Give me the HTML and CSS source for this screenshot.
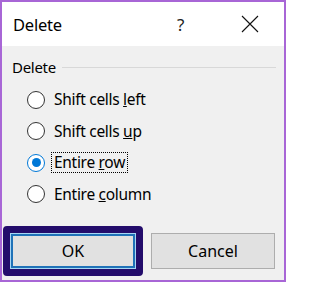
FILE: index.html
```html
<!DOCTYPE html>
<html>
<head>
<meta charset="utf-8">
<link rel="stylesheet" href="styles.css">
</head>
<body>
<div class="dialog">
  <div class="titlebar">
    <span class="title">Delete</span>
    <span class="help">?</span>
    <span class="close">
      <svg width="18" height="18" viewBox="0 0 18 18"><path d="M1 1 L17 17 M17 1 L1 17" stroke="#111" stroke-width="1.1" fill="none"/></svg>
    </span>
  </div>
  <div class="body">
    <div class="group-head"><span class="group-label">Delete</span><span class="group-line"></span></div>
    <div class="options">
      <div class="opt"><span class="radio"></span><span class="lbl">Shift cells <u>l</u>eft</span></div>
      <div class="opt"><span class="radio"></span><span class="lbl">Shift cells <u>u</u>p</span></div>
      <div class="opt"><span class="radio checked"></span><span class="lbl focus">Entire <u>r</u>ow</span></div>
      <div class="opt"><span class="radio"></span><span class="lbl">Entire <u>c</u>olumn</span></div>
    </div>
    <div class="buttons">
      <div class="ok-frame"><div class="btn ok">OK</div></div>
      <div class="btn cancel">Cancel</div>
    </div>
  </div>
</div>
</body>
</html>
```
FILE: styles.css
```css
html, body { margin: 0; padding: 0; }
body { font-family: "Noto Sans", "Open Sans", sans-serif; color: #000; }
.dialog {
  width: 286px; height: 282px; box-sizing: border-box;
  border: 2px solid #a866d6;
  display: flex; flex-direction: column;
  background: #f0f0f0;
}
.titlebar {
  height: 44px; background: #fff; display: flex; align-items: center;
  padding-left: 11px;
}
.title { font-size: 16.5px; letter-spacing: -0.2px; flex: 1; }
.help { font-size: 17px; width: 10px; margin-right: 54px; color: #222; }
.close { width: 18px; height: 18px; margin-right: 25px; display: flex; }
.body { flex: 1; display: flex; flex-direction: column; padding: 10px 0 4px 0; }
.group-head { display: flex; align-items: center; padding-left: 10px; padding-right: 8px; height: 22px; }
.group-label { font-size: 15px; letter-spacing: -0.3px; }
.group-line { flex: 1; height: 1px; background: #d8d8d8; margin-left: 6px; }
.options { display: flex; flex-direction: column; padding-left: 25px; margin-top: 6px; }
.opt { height: 31.5px; display: flex; align-items: center; font-size: 15.5px; letter-spacing: -0.3px; }
.radio {
  width: 18px; height: 18px; box-sizing: border-box; border-radius: 50%;
  border: 1px solid #333; background: #fff; margin-right: 6px;
  display: flex; align-items: center; justify-content: center;
}
.radio.checked { border-color: #0078d7; }
.radio.checked::after { content: ""; width: 9px; height: 9px; border-radius: 50%; background: #0078d7; }
.lbl { padding: 0 2px; line-height: 19px; border: 1px dotted transparent; }
.lbl.focus { border-color: #000; }
.buttons { margin-top: auto; display: flex; align-items: center; padding-left: 1px; }
.ok-frame { border: 7px solid #230c6b; border-radius: 4px; margin-right: 8px; }
.btn {
  box-sizing: border-box; height: 36px; display: flex; align-items: center; justify-content: center;
  background: #e1e1e1; font-size: 16px;
}
.ok { width: 126px; border: 1px solid #a6d6f4; box-shadow: inset 0 0 0 2px #1f72b8; }
.cancel { width: 124px; border: 1px solid #adadad; }
```
